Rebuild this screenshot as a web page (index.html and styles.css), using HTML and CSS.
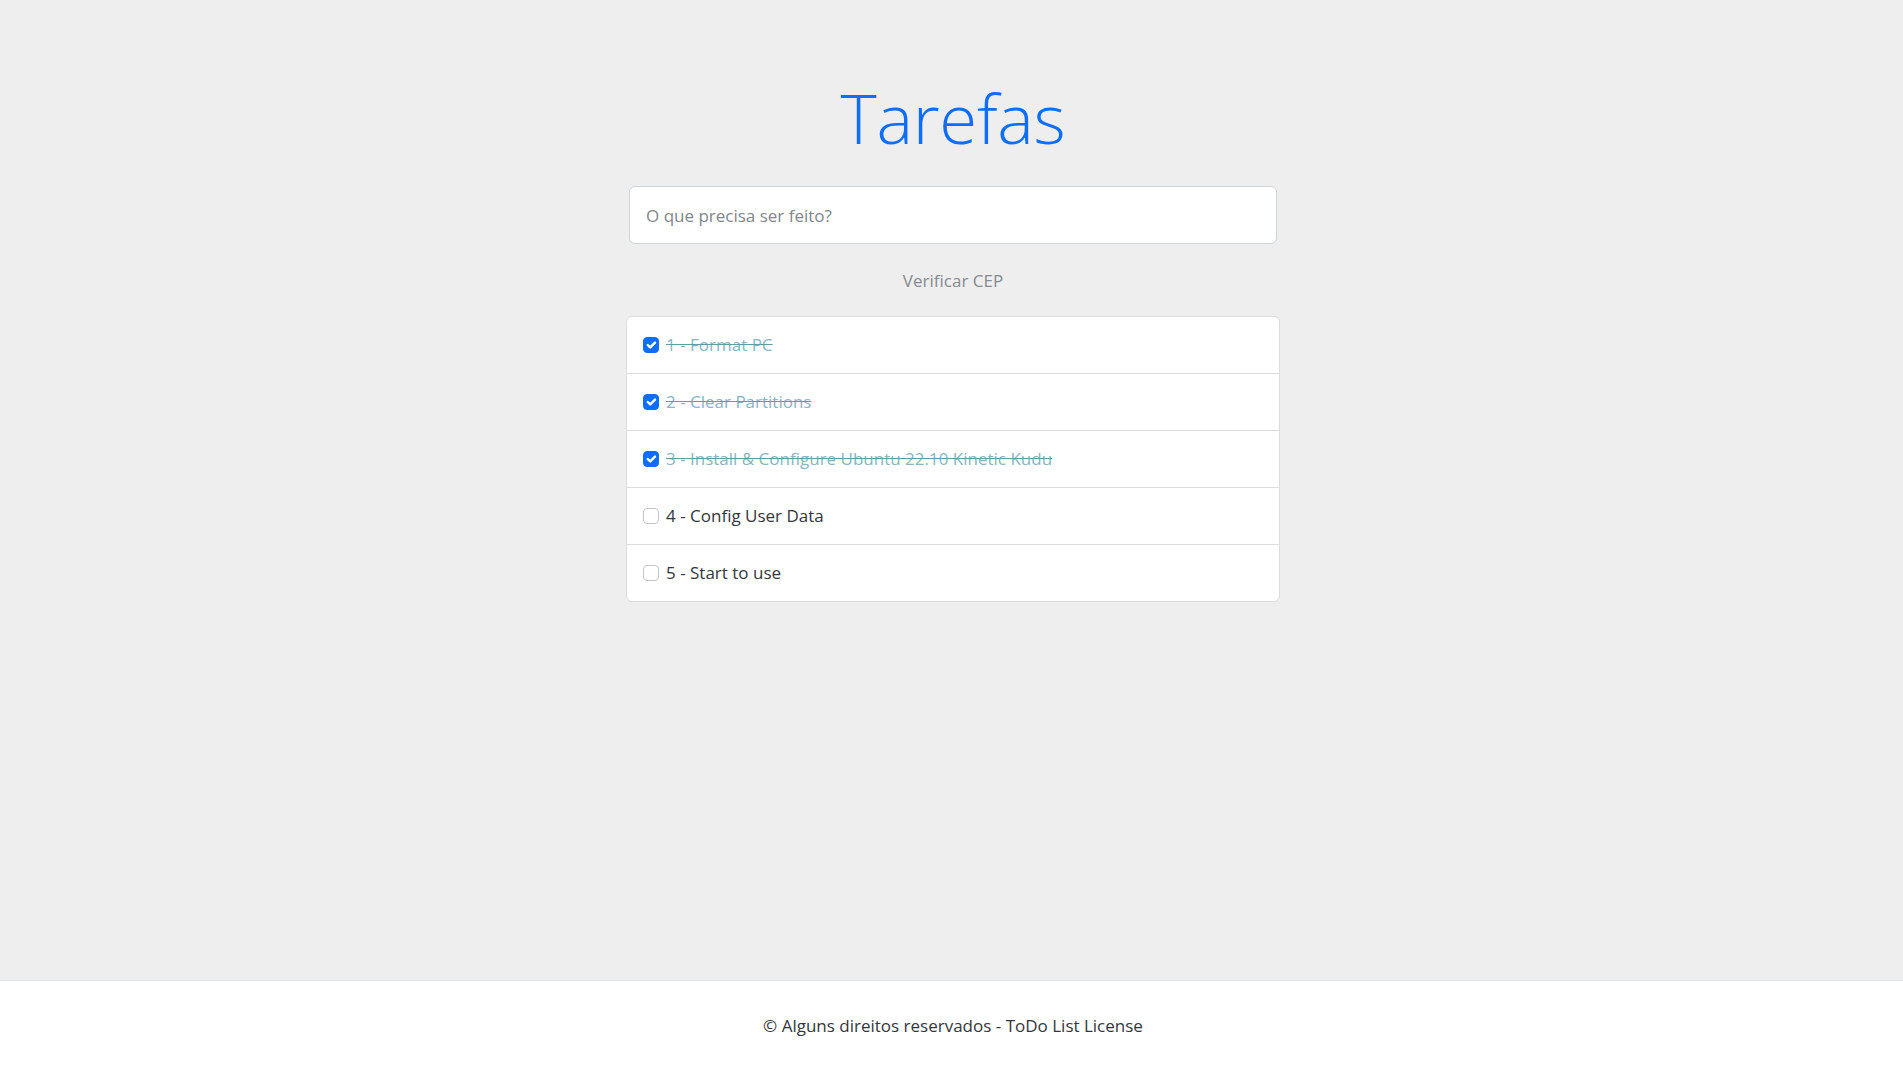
FILE: index.html
```html
<!DOCTYPE html>
<html lang="pt-BR">
<head>
<meta charset="utf-8">
<title>Tarefas</title>
<link rel="stylesheet" href="styles.css">
</head>
<body>
<main class="main">
  <div class="container">
    <h1 class="title">Tarefas</h1>
    <input class="task-input" type="text" placeholder="O que precisa ser feito?">
    <div class="cep-row"><button class="cep-btn" type="button">Verificar CEP</button></div>
    <ul class="list">
      <li class="item done">
        <span class="check checked"><svg viewBox="0 0 20 20" width="16" height="16"><path fill="none" stroke="#fff" stroke-linecap="round" stroke-linejoin="round" stroke-width="3" d="m6 10 3 3 6-6"/></svg></span>
        <span class="label">1 - Format PC</span>
      </li>
      <li class="item done">
        <span class="check checked"><svg viewBox="0 0 20 20" width="16" height="16"><path fill="none" stroke="#fff" stroke-linecap="round" stroke-linejoin="round" stroke-width="3" d="m6 10 3 3 6-6"/></svg></span>
        <span class="label">2 - Clear Partitions</span>
      </li>
      <li class="item done">
        <span class="check checked"><svg viewBox="0 0 20 20" width="16" height="16"><path fill="none" stroke="#fff" stroke-linecap="round" stroke-linejoin="round" stroke-width="3" d="m6 10 3 3 6-6"/></svg></span>
        <span class="label">3 - Install &amp; Configure Ubuntu 22.10 Kinetic Kudu</span>
      </li>
      <li class="item">
        <span class="check"></span>
        <span class="label">4 - Config User Data</span>
      </li>
      <li class="item">
        <span class="check"></span>
        <span class="label">5 - Start to use</span>
      </li>
    </ul>
  </div>
</main>
<footer class="footer">
  <p class="footer-text">© Alguns direitos reservados - ToDo List License</p>
</footer>
</body>
</html>
```
FILE: styles.css
```css
* { box-sizing: border-box; }

html, body { height: 100%; }

body {
  margin: 0;
  min-height: 100vh;
  display: flex;
  flex-direction: column;
  background: #eeeeee;
  font-family: "Open Sans", "Noto Sans", sans-serif;
  font-size: 17px;
  color: #212529;
}

.main {
  flex: 1;
  padding-top: 76px;
  padding-left: 3px;
}

.container {
  width: 654px;
  margin: 0 auto;
  display: flex;
  flex-direction: column;
  align-items: center;
}

.title {
  margin: 0;
  font-size: 69px;
  line-height: 83px;
  font-weight: 300;
  color: #0d6efd;
  letter-spacing: -0.3px;
}

.task-input {
  margin-top: 27px;
  width: 648px;
  height: 58px;
  padding: 0 16px;
  border: 1px solid #ced4da;
  border-radius: 6px;
  background: #fff;
  font-family: inherit;
  font-size: 17px;
  color: #212529;
  outline: none;
}

.task-input::placeholder { color: #80868c; opacity: 1; }

.cep-row {
  margin-top: 17px;
  margin-bottom: 17px;
  height: 38px;
  display: flex;
  align-items: center;
  justify-content: center;
}

.cep-btn {
  border: 0;
  background: transparent;
  padding: 0 12px;
  font-family: inherit;
  font-size: 17px;
  color: #868b91;
  cursor: pointer;
}

.list {
  list-style: none;
  margin: 0;
  padding: 0;
  width: 654px;
  background: #fff;
  border: 1px solid #dcdcdc;
  border-radius: 6px;
}

.item {
  height: 56px;
  padding: 0 16px;
  display: flex;
  align-items: center;
}

.item + .item {
  height: 57px;
  border-top: 1px solid #dcdcdc;
}

.check {
  width: 16px;
  height: 16px;
  flex: none;
  border: 1px solid #c4c4c4;
  border-radius: 4px;
  background: #fff;
  margin-right: 7px;
  display: flex;
  align-items: center;
  justify-content: center;
}

.check.checked {
  background: #0d6efd;
  border-color: #0d6efd;
}

.check svg { display: block; flex: none; }

.label {
  line-height: 24px;
  color: #33373b;
}

.done .label {
  color: #86b6c4;
  text-decoration: line-through;
  text-decoration-color: #5f9ea0;
}

.footer {
  height: 92px;
  background: #fff;
  border-top: 1px solid #dee2e6;
  display: flex;
  align-items: center;
  justify-content: center;
  padding-left: 3px;
  padding-bottom: 3px;
}

.footer-text {
  margin: 0;
  font-size: 17px;
  color: #33373b;
}
```
